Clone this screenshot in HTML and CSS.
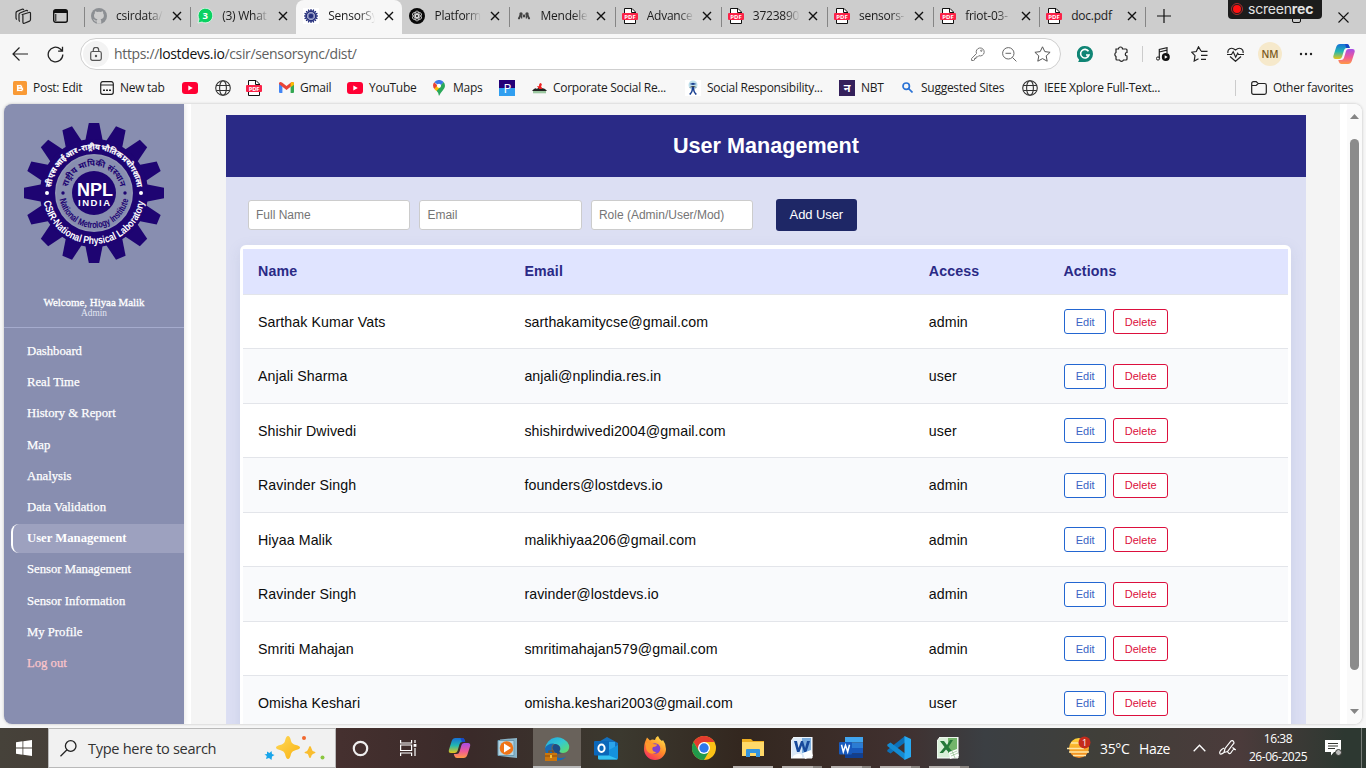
FILE: index.html
```html
<!DOCTYPE html>
<html lang="en">
<head>
<meta charset="utf-8">
<title>SensorSync</title>
<link rel="stylesheet" href="styles.css">
</head>
<body>
<svg class="defs" width="0" height="0" aria-hidden="true">
  <defs>
    <symbol id="close" viewBox="0 0 10 10"><path d="M1 1 9 9M9 1 1 9" fill="none" stroke="#111" stroke-width="1.4"/></symbol>
    <symbol id="pdf" viewBox="0 0 16 16"><path d="M2.500 5V.5h7.500l3.500 3.500V15.500h-11V12" fill="#fff" stroke="#111"/><path d="M9.500.5V4.500h4" fill="none" stroke="#111"/><rect x="0" y="5" width="16" height="7" rx="1" fill="#fb2348"/><text x="8" y="10.700" font-size="6" font-weight="700" text-anchor="middle" fill="#fff">PDF</text></symbol>
    <symbol id="globe" viewBox="0 0 16 16"><g fill="none" stroke="#333" stroke-width="1.100"><circle cx="8" cy="8" r="7.300"/><ellipse cx="8" cy="8" rx="3.400" ry="7.300"/><path d="M1.300 5.500h13.400M1.300 10.500h13.400"/></g></symbol>
    <symbol id="yt" viewBox="0 0 16 12"><rect width="16" height="12" rx="3" fill="#ff0033"/><path d="M6.300 3.500v5L10.800 6z" fill="#fff"/></symbol>
    <linearGradient id="cpA" x1="0" y1="0" x2="0" y2="1"><stop offset="0" stop-color="#1670d8"/><stop offset=".5" stop-color="#22b7b0"/><stop offset="1" stop-color="#e6c619"/></linearGradient>
    <linearGradient id="cpB" x1="0" y1="0" x2="0" y2="1"><stop offset="0" stop-color="#a64de8"/><stop offset=".55" stop-color="#f05a96"/><stop offset="1" stop-color="#ff9a45"/></linearGradient>
    <symbol id="copilot" viewBox="0 0 22 22"><path d="M7 1h6.500q2 0 2.600 2l.6 2h-3q-2 0-2.700 2.300L9 14q-.8 2-2.700 2H2.500Q-.5 16 .5 12.500L3.200 4Q4.200 1 7 1z" fill="url(#cpA)"/><path d="M12 1h2q1.700 0 2.200 2l.6 2h-3.500z" fill="#1747c6"/><path d="M15 21H8.500q-2 0-2.600-2l-.6-2h3q2 0 2.700-2.300L13 8q.8-2 2.700-2h3.800q3 0 2 3.500L18.800 18q-1 3-3.800 3z" fill="url(#cpB)"/></symbol>
    <linearGradient id="edgeG" x1="0" y1="0" x2="1" y2="1"><stop offset="0" stop-color="#1fa5e4"/><stop offset=".5" stop-color="#35c8d0"/><stop offset="1" stop-color="#66e05a"/></linearGradient>
    <linearGradient id="ffG" x1=".8" y1="0" x2=".2" y2="1"><stop offset="0" stop-color="#ffe44d"/><stop offset=".5" stop-color="#ff8b28"/><stop offset="1" stop-color="#f52764"/></linearGradient>
    <linearGradient id="sunG" x1="0" y1="0" x2="0" y2="1"><stop offset="0" stop-color="#ffd43a"/><stop offset="1" stop-color="#f0821b"/></linearGradient>
    <linearGradient id="starG" x1="0" y1="0" x2="1" y2="1"><stop offset="0" stop-color="#ffd95a"/><stop offset="1" stop-color="#f8b211"/></linearGradient>
    <path id="tooth" d="M-9 -51 -5.200 -70H5.200L9 -51z"/>
    <symbol id="gear" viewBox="-70 -70 140 140"><use href="#tooth"/><use href="#tooth" transform="rotate(22.500)"/><use href="#tooth" transform="rotate(45)"/><use href="#tooth" transform="rotate(67.500)"/><use href="#tooth" transform="rotate(90)"/><use href="#tooth" transform="rotate(112.500)"/><use href="#tooth" transform="rotate(135)"/><use href="#tooth" transform="rotate(157.500)"/><use href="#tooth" transform="rotate(180)"/><use href="#tooth" transform="rotate(202.500)"/><use href="#tooth" transform="rotate(225)"/><use href="#tooth" transform="rotate(247.500)"/><use href="#tooth" transform="rotate(270)"/><use href="#tooth" transform="rotate(292.500)"/><use href="#tooth" transform="rotate(315)"/><use href="#tooth" transform="rotate(337.500)"/><circle r="46" fill="none" stroke="currentColor" stroke-width="16"/></symbol>
    <path id="arcOutTop" d="M-43.500 0A43.500 43.500 0 0 1 43.500 0"/>
    <path id="arcOutBot" d="M-51 0A51 51 0 0 0 51 0"/>
    <path id="arcInTop" d="M-27 0A27 27 0 0 1 27 0"/>
    <path id="arcInBot" d="M-35 0A35 35 0 0 0 35 0"/>
  </defs>
</svg>

<header class="tabs">
  <div class="tabs-lead">
    <svg width="17" height="17" viewBox="0 0 17 17" fill="none" stroke="#222" stroke-width="1.200"><path d="M7.500 6.500 14 4.500q1.500-.3 1.500 1v6q0 1.200-1 1.600l-5 2.200q-1.600.5-1.600-1.200V8q0-1.200-.4-1.500z"/><path d="M5 13.500q-1-.3-1-1.500V6.500q0-1 1-1.500l6-2.500q1.300-.4 1.700.8M2 11.500q-1-.3-1-1.500V5q0-1.200 1-1.600L7 1.200q1.300-.4 1.800.8"/></svg>
    <svg width="15" height="14" viewBox="0 0 15 14"><rect x=".7" y=".7" width="13.600" height="12.600" rx="2" fill="none" stroke="#111" stroke-width="1.400"/><path d="M1 1h13v3H1z" fill="#111"/><path d="M2.800 5v7" stroke="#111"/></svg>
  </div>
  <div class="tab"><svg class="fav" viewBox="0 0 16 16"><circle cx="8" cy="8" r="8" fill="#8c8f93"/><path d="M5.800 15.800v-2.300c-2 .4-2.400-.9-3-1.600l-.6-.5c1.300-.4 1.700 1.100 2.400 1.200.6.100 1 0 1.300-.3.100-.6.300-.9.600-1.100C4 10.900 3 9.800 3 7.500c0-.9.300-1.600.9-2.200-.2-.7-.1-1.500.2-2.100.8 0 1.500.5 2 .8q1.900-.5 3.800 0c.5-.3 1.300-.8 2-.8.300.7.400 1.500.2 2.100.5.600.8 1.300.8 2.200 0 2.300-1 3.400-3.400 3.700.5.400.7.900.7 1.700v2.900z" fill="#cdcdcd"/></svg><span class="t">csirdata/</span><svg class="x"><use href="#close"/></svg></div>
  <div class="tab"><svg class="fav" viewBox="0 0 16 16"><path d="M1 15 2 11a7.300 7.300 0 1 1 3 3z" fill="#0bd162" stroke="#fff" stroke-width=".7"/><text x="8.200" y="11.300" text-anchor="middle" font-size="9.500" font-weight="700" fill="#fff">3</text></svg><span class="t">(3) What</span><svg class="x"><use href="#close"/></svg></div>
  <div class="tab active"><svg class="fav gear-mini" viewBox="-8 -8 16 16"><path d="M-8-8H8V8H-8z" fill="#fff"/><use href="#gear" x="-7" y="-7" width="14" height="14"/><circle r="3.600" fill="#7f86b8"/><circle r="2.300"/></svg><span class="t">SensorSy</span><svg class="x"><use href="#close"/></svg></div>
  <div class="tab first-after"><svg class="fav" viewBox="0 0 16 16"><circle cx="8" cy="8" r="8" fill="#080808"/><g fill="none" stroke="#ddd" stroke-width=".8"><ellipse cx="8" cy="6.300" rx="2.200" ry="3.300"/><ellipse cx="8" cy="6.300" rx="2.200" ry="3.300" transform="rotate(60 8 8)"/><ellipse cx="8" cy="6.300" rx="2.200" ry="3.300" transform="rotate(120 8 8)"/><ellipse cx="8" cy="6.300" rx="2.200" ry="3.300" transform="rotate(180 8 8)"/><ellipse cx="8" cy="6.300" rx="2.200" ry="3.300" transform="rotate(240 8 8)"/><ellipse cx="8" cy="6.300" rx="2.200" ry="3.300" transform="rotate(300 8 8)"/></g></svg><span class="t">Platform</span><svg class="x"><use href="#close"/></svg></div>
  <div class="tab"><svg class="fav" viewBox="0 0 16 16" fill="#444"><circle cx="8" cy="8" r="1.400"/><circle cx="5" cy="6" r="1.700"/><circle cx="11" cy="6" r="1.700"/><path d="M4.300 6.500q2.200 0 2 4H5L4.500 8.500 3.800 11H2.500q0-4 1.800-4.500zM11.700 6.500q-2.200 0-2 4H11l.5-2 .7 2.500h1.300q0-4-1.800-4.500z"/><circle cx="3" cy="10.300" r="1.100"/><circle cx="13" cy="10.300" r="1.100"/></svg><span class="t">Mendele</span><svg class="x"><use href="#close"/></svg></div>
  <div class="tab"><svg class="fav"><use href="#pdf"/></svg><span class="t">Advance</span><svg class="x"><use href="#close"/></svg></div>
  <div class="tab"><svg class="fav"><use href="#pdf"/></svg><span class="t">3723890</span><svg class="x"><use href="#close"/></svg></div>
  <div class="tab"><svg class="fav"><use href="#pdf"/></svg><span class="t">sensors-</span><svg class="x"><use href="#close"/></svg></div>
  <div class="tab"><svg class="fav"><use href="#pdf"/></svg><span class="t">friot-03-</span><svg class="x"><use href="#close"/></svg></div>
  <div class="tab"><svg class="fav"><use href="#pdf"/></svg><span class="t nofade">doc.pdf</span><svg class="x"><use href="#close"/></svg></div>
  <div class="tab-new"><svg width="14" height="14" viewBox="0 0 14 14"><path d="M7 0v14M0 7h14" stroke="#111" stroke-width="1.200"/></svg></div>
  <div class="win-ctl"><svg width="9" height="11" viewBox="0 0 9 11"><rect x=".5" y=".5" width="8" height="10" rx="1.500" fill="none" stroke="#111"/></svg><svg width="11" height="11" viewBox="0 0 11 11"><path d="m.5.5 10 10m0-10-10 10" stroke="#111" stroke-width="1.100"/></svg></div>
  <div class="screenrec"><svg width="12" height="12" viewBox="0 0 12 12"><circle cx="6" cy="6" r="5.500" fill="none" stroke="#c33" stroke-width=".8"/><circle cx="6" cy="6" r="4" fill="#f11"/></svg><span>screen<b>rec</b></span></div>
</header>

<nav class="toolbar">
  <svg width="16" height="14" viewBox="0 0 16 14" fill="none" stroke="#222" stroke-width="1.200"><path d="M16 7H1M7.500.5 1 7l6.500 6.500"/></svg>
  <svg width="17" height="17" viewBox="0 0 17 17" fill="none" stroke="#222" stroke-width="1.300"><path d="M15.800 8.500A7.300 7.300 0 1 1 13.300 3l2 2M15.500.8V5.200h-4.400"/></svg>
  <div class="address">
    <span class="lock"><svg width="12" height="14" viewBox="0 0 12 14" fill="none" stroke="#555" stroke-width="1.200"><rect x=".7" y="4.500" width="10.600" height="8.800" rx="1.700"/><path d="M3.300 4.500V3a2.700 2.700 0 0 1 5.400 0v1.500"/><circle cx="6" cy="9" r=".6" fill="#555"/></svg></span>
    <span class="url">https://<b>lostdevs.io</b>/csir/sensorsync/dist/</span>
    <svg width="14" height="14" viewBox="0 0 14 14" fill="none" stroke="#777"><path d="M5.500 6.500a4 4 0 1 1 2.300 2.200L6.500 10H5v1.500H3.500V13l-1 .5H.6v-2z"/><circle cx="10.300" cy="3.700" r=".7"/></svg>
    <svg width="15" height="15" viewBox="0 0 15 15" fill="none" stroke="#666"><circle cx="6.300" cy="6.300" r="5.700"/><path d="M3.500 6.300h5.600M10.400 10.400l4 4"/></svg>
    <svg width="17" height="16" viewBox="0 0 17 16" fill="none" stroke="#555" stroke-linejoin="round"><path d="m8.500.8 2.300 4.800 5.300.7-3.900 3.600 1 5.300-4.700-2.600-4.700 2.600 1-5.300L.9 6.300l5.300-.7z"/></svg>
  </div>
  <div class="ext">
    <svg width="16" height="16" viewBox="0 0 16 16"><path d="M8 0a8 8 0 0 1 8 8 8 8 0 0 1-8 8H1q1-1 1-2.500A8 8 0 0 1 8 0z" fill="#108575"/><path d="M11.500 5.300A4.300 4.300 0 1 0 12 9H9" fill="none" stroke="#fff" stroke-width="1.600"/></svg>
    <svg width="16" height="16" viewBox="0 0 16 16" fill="none" stroke="#222" stroke-width="1.200"><path d="M3 3h2.500a2 2 0 1 1 4 0H13q1 0 1 1v2.500a1.500 1.500 0 0 0 0 3.500V13q0 1-1 1h-2.500a2.200 2.200 0 0 1-4 0H4q-1 0-1-1v-2.500a2.300 2.300 0 0 1 0-4z"/></svg>
    <i class="vr"></i>
    <svg width="14" height="14" viewBox="0 0 14 14"><path d="M3.300 11.500V2.500L11 .7V6M3.300 5 11 3.200" fill="none" stroke="#222" stroke-width="1.200"/><circle cx="2" cy="11.500" r="1.600" fill="none" stroke="#222"/><circle cx="9.800" cy="10" r="4" fill="#111"/><path d="m8.700 8.200 3 1.800-3 1.800z" fill="#fff"/></svg>
    <svg width="17" height="16" viewBox="0 0 17 16" fill="none" stroke="#222" stroke-width="1.200"><path d="M10 5 7.500.8 5.300 5.500.7 6.200 4 9.600 3.200 15l4.300-2.300M10 5.300h6.500M10 9.300h6.500M10 13.300h5"/></svg>
    <svg width="17" height="15" viewBox="0 0 17 15" fill="none" stroke="#222" stroke-width="1.200"><path d="M1 6C.2 2.500 4-.8 8.500 3 13-.8 16.800 2.500 16 6M3 9.500l5.500 4.800L14 9.500M0 7.500h4.500l1.700-2.800 2.500 5.500 2-4 .8 1.300H17"/></svg>
    <span class="avatar">NM</span>
    <svg width="14" height="4" viewBox="0 0 14 4" fill="#222"><circle cx="2" cy="2" r="1.200"/><circle cx="7" cy="2" r="1.200"/><circle cx="12" cy="2" r="1.200"/></svg>
    <svg width="22" height="22"><use href="#copilot"/></svg>
  </div>
</nav>

<nav class="bookmarks">
  <span><svg width="14" height="14" viewBox="0 0 14 14"><rect width="14" height="14" rx="1.500" fill="#f99a35"/><path d="M4 3.500h3.500q2 0 2 2v.7q1 0 1 1V8.500q0 2-2 2H4.500q-1 0-1-1v-5q0-1 .5-1zM5.500 5.700h2M5.500 8.400h3" fill="#fff" stroke="#f99a35" stroke-width=".9"/></svg>Post: Edit</span>
  <span><svg width="14" height="14" viewBox="0 0 14 14" fill="none" stroke="#222" stroke-width="1.200"><path d="M.7 4h12.600M3 .7h8M.7 3v8.300q0 2 2 2h8.600q2 0 2-2V3q0-2.300-2-2.300H2.700Q.7.700.7 3z"/><path d="M3 9.200h2M6 9.200h2M9 9.200h2" stroke-width="1.600"/></svg>New tab</span>
  <span><svg width="16" height="12"><use href="#yt"/></svg></span>
  <span><svg width="16" height="16"><use href="#globe"/></svg></span>
  <span><svg width="16" height="16"><use href="#pdf"/></svg></span>
  <span><svg width="15" height="11" viewBox="0 0 15 11"><path d="M0 1.500V10q0 1 1 1h2.400V3z" fill="#4285f4"/><path d="M11.600 3v8H14q1 0 1-1V1.500z" fill="#34a853"/><path d="M0 2V1.500Q.5-.8 3 .5L7.500 4 12 .5q2.500-1.300 3 1V2L7.500 8z" fill="#ea4335"/><path d="M11.600.9 12 .5q2.500-1.300 3 1v1.300l-3.400 2.500z" fill="#fbbc04"/></svg>Gmail</span>
  <span><svg width="16" height="12"><use href="#yt"/></svg>YouTube</span>
  <span class="wide"><svg width="12" height="16" viewBox="0 0 12 16"><path d="M6 16Q5.500 12.500 3 10L10.500 2q1.500 1.500 1.500 4 0 2-2.300 4.500Q7 13.500 6 16z" fill="#2aa85a"/><path d="M1.300 2.300 5 6 1.500 9Q0 7.500 0 5.500t1.300-3.200z" fill="#e94335"/><path d="M1.300 2.300A6 6 0 0 1 10.600 2L7 6z" fill="#3c78e8"/><path d="m1.300 9 3-3.500 3.500 1L3.500 11z" fill="#fbbc04"/><circle cx="6" cy="5.800" r="2.100" fill="#fff"/></svg>Maps</span>
  <span><svg width="16" height="16" viewBox="0 0 16 16"><path d="M0 0h16v8H0z" fill="#240078"/><path d="M0 8h16v8H0z" fill="#319ff0"/><text x="8.200" y="12.700" font-size="13" text-anchor="middle" fill="#fff">P</text></svg></span>
  <span><svg width="15" height="12" viewBox="0 0 15 12"><path d="M1 9h13v2.300H1z" fill="#9bc7a0"/><path d="M0 9q3-4 5-2 2-3 4-1 4 0 6 3z" fill="#222"/><path d="M7 7 5 4l2 .3Q7 1 9 1l1 2-1 1 1.500 3z" fill="#e22"/></svg>Corporate Social Re...</span>
  <span><svg width="16" height="16" viewBox="0 0 16 16"><path d="M0 0h16v16H0z" fill="#fff"/><circle cx="8" cy="5" r="4.500" fill="#bfe0ec"/><path d="M4.500 4 8 2.800 11.500 4 8 5zM4 14q3-2 2.800-7h2.400Q9 12 12 14l-1.500 1Q8 12 8 10q0 2-2.500 5z" fill="#183f91"/><path d="M4 7.500q4-3 8 0L8 7z" fill="#333"/></svg>Social Responsibility...</span>
  <span><svg width="16" height="16" viewBox="0 0 16 16"><path d="M0 0h16v16H0z" fill="#34205b"/><text x="8" y="12" font-size="11" font-weight="700" text-anchor="middle" fill="#fff">न</text></svg>NBT</span>
  <span class="wide"><svg width="11" height="11" viewBox="0 0 11 11" fill="none" stroke="#2b73d5" stroke-width="1.700"><circle cx="4.200" cy="4.200" r="3.200"/><path d="m6.500 6.500 4 4"/></svg>Suggested Sites</span>
  <span><svg width="16" height="16"><use href="#globe"/></svg>IEEE Xplore Full-Text...</span>
  <span class="other"><svg width="16" height="14" viewBox="0 0 16 14" fill="none" stroke="#222" stroke-width="1.200"><path d="M.7 11.500v-9Q.7.700 2.500.7h2.700L7 2.500h6.500q1.800 0 1.800 1.800v7.200q0 1.800-1.800 1.800h-11Q.7 13.300.7 11.500zM.7 4.500h4.500l2-2"/></svg>Other favorites</span>
</nav>

<div class="page">
  <aside class="sidebar">
    <svg class="logo" viewBox="-70 -70 140 140">
      <use href="#gear" x="-70" y="-70" width="140" height="140"/>
      <circle r="39" fill="#9297b5"/><circle r="37.500" fill="#888eb0"/><circle r="22"/>
      <g fill="#fff" font-weight="700" text-anchor="middle">
        <text class="npl" x="1" y="2.500" textLength="36">NPL</text>
        <text class="india" x="0" y="13" textLength="32">INDIA</text>
        <text class="hindi"><textPath href="#arcOutTop" startOffset="50%">सी एस आई आर - राष्ट्रीय भौतिक प्रयोगशाला</textPath></text>
        <text class="arc"><textPath href="#arcOutBot" startOffset="50%" textLength="143" lengthAdjust="spacingAndGlyphs">CSIR-National Physical Laboratory</textPath></text>
        <circle cx="-47" r="2"/><circle cx="47" r="2"/>
      </g>
      <g font-weight="700" text-anchor="middle">
        <text class="hindi inner"><textPath href="#arcInTop" startOffset="50%">राष्ट्रीय मापिकी संस्थान</textPath></text>
        <text class="arc small"><textPath href="#arcInBot" startOffset="50%" textLength="97" lengthAdjust="spacingAndGlyphs">National Metrology Institute</textPath></text>
        <circle cx="-31" r="1.700"/><circle cx="31" r="1.700"/>
      </g>
    </svg>
    <div class="who"><strong>Welcome, Hiyaa Malik</strong><small>Admin</small></div>
    <ul class="menu">
      <li>Dashboard</li><li>Real Time</li><li>History &amp; Report</li><li>Map</li><li>Analysis</li><li>Data Validation</li><li class="on">User Management</li><li>Sensor Management</li><li>Sensor Information</li><li>My Profile</li><li class="out">Log out</li>
    </ul>
  </aside>
  <main class="main">
    <section class="panel">
      <h1>User Management</h1>
      <form class="add">
        <input placeholder="Full Name"><input placeholder="Email"><input placeholder="Role (Admin/User/Mod)"><button type="button">Add User</button>
      </form>
      <div class="card">
        <div class="row head"><span>Name</span><span>Email</span><span>Access</span><span>Actions</span></div>
        <div class="row"><span>Sarthak Kumar Vats</span><span>sarthakamitycse@gmail.com</span><span>admin</span><span class="act"><button>Edit</button><button class="del">Delete</button></span></div>
        <div class="row"><span>Anjali Sharma</span><span>anjali@nplindia.res.in</span><span>user</span><span class="act"><button>Edit</button><button class="del">Delete</button></span></div>
        <div class="row"><span>Shishir Dwivedi</span><span>shishirdwivedi2004@gmail.com</span><span>user</span><span class="act"><button>Edit</button><button class="del">Delete</button></span></div>
        <div class="row"><span>Ravinder Singh</span><span>founders@lostdevs.io</span><span>admin</span><span class="act"><button>Edit</button><button class="del">Delete</button></span></div>
        <div class="row"><span>Hiyaa Malik</span><span>malikhiyaa206@gmail.com</span><span>admin</span><span class="act"><button>Edit</button><button class="del">Delete</button></span></div>
        <div class="row"><span>Ravinder Singh</span><span>ravinder@lostdevs.io</span><span>admin</span><span class="act"><button>Edit</button><button class="del">Delete</button></span></div>
        <div class="row"><span>Smriti Mahajan</span><span>smritimahajan579@gmail.com</span><span>admin</span><span class="act"><button>Edit</button><button class="del">Delete</button></span></div>
        <div class="row"><span>Omisha Keshari</span><span>omisha.keshari2003@gmail.com</span><span>user</span><span class="act"><button>Edit</button><button class="del">Delete</button></span></div>
      </div>
    </section>
  </main>
  <div class="scroll"><svg width="9" height="5" viewBox="0 0 9 5"><path d="M0 5 4.500 0 9 5z" fill="#858585"/></svg><i></i><svg width="9" height="5" viewBox="0 0 9 5"><path d="M0 0h9L4.500 5z" fill="#858585"/></svg></div>
</div>

<footer class="taskbar">
  <div class="start"><svg width="16" height="16" viewBox="0 0 16 16" fill="#fff"><path d="M0 2.200 6.500 1.300V7.600H0zM7.300 1.200 16 0v7.600H7.300zM0 8.400h6.500v6.300L0 13.800zM7.300 8.400H16V16l-8.700-1.200z"/></svg></div>
  <div class="search">
    <svg width="17" height="17" viewBox="0 0 17 17" fill="none" stroke="#222" stroke-width="1.300"><circle cx="10.700" cy="6" r="5.300"/><path d="M7 9.800.5 16.300"/></svg>
    <span>Type here to search</span>
    <svg class="sparkle" width="62" height="26" viewBox="0 0 62 26"><path d="M24 1q2 0 3 5 .8 3 5 4 4 1 4 2.500T32 15q-4.200 1-5 4-1 5-3 5t-3-5q-.8-3-5-4-4-1-4-2.500T16 10q4.200-1 5-4 1-5 3-5z" fill="url(#starG)"/><path d="M46 11q1 0 1.500 2.500t2.500 3q1.500.5 1.500 1T50 18.500t-2.500 2Q47 23 46 23t-1.500-2.500T42 18.500q-1.500-.5-1.500-1t1.500-1 2.500-3Q45 11 46 11z" fill="#f9bd2e"/><path d="m3 16.500 2.500 1.500 2-2 .5 3 2.500 1L8 21.500 7.500 25 5 23l-3 1 .8-3L.5 19.500 3 19z" fill="#19a5ea"/><circle cx="40" cy="3" r="2" fill="#f1672d"/><circle cx="58.500" cy="22.500" r="2" fill="#8ac63f"/></svg>
  </div>
  <div class="sys"><svg width="17" height="17" viewBox="0 0 17 17"><circle cx="8.500" cy="8.500" r="6.700" fill="none" stroke="#eee" stroke-width="2.200"/></svg></div>
  <div class="sys"><svg width="17" height="16" viewBox="0 0 17 16" fill="none" stroke="#fff" stroke-width="1.200"><path d="M.6 0v3h11V0M.6 16v-3h11v3M.6 5h11v5.500H.6zM15 0v3M15 8v8"/><path d="M13.600 4h2.800v2.800h-2.800z" fill="#fff" stroke="none"/></svg></div>
  <div class="apps">
    <div><svg width="23" height="22"><use href="#copilot"/></svg></div>
    <div><svg width="22" height="20" viewBox="0 0 22 20"><path d="M3 1.500 20 0v20L3 18z" fill="#89b3c7"/><path d="M1 2.500h16v15H1z" fill="#b4d5e3" stroke="#6a9bb2"/><circle cx="9.500" cy="10" r="6.800" fill="#ef7417"/><path d="M7 5.500v9l7-4.500z" fill="#fff"/></svg></div>
    <div class="current"><svg width="25" height="25" viewBox="0 0 25 25"><path d="M0 13A12.500 12.500 0 0 1 24 9c1 5-2 8-6 8-3 0-4-1-3.300-2 2-3-.5-7-5-7Q3 8 0 13z" fill="url(#edgeG)"/><path d="M0 12q3-5 9-4.500Q5 10 7 15.500q2 6 8 6.500 3 .2 6-1.500-3 4-8.500 4Q1 24 0 12z" fill="#176bb7"/><path d="M7.500 12Q8 8.500 10 8q4 .5 5 3.500.5 2-.7 3.500-.5 2 3 2-7 3-9.800-5z" fill="#1b4c86"/><path d="M0 17h12v8H0z" fill="#ca750d"/><path d="M4 17v-2h4v2M0 20h12" fill="none" stroke="#8c4c09" stroke-width="1.200"/><path d="M5 19h2v3H5z" fill="#f6bd33"/></svg></div>
    <div><svg width="24" height="23" viewBox="0 0 24 23"><path d="M3 6 13 0l11 6v5H3z" fill="#1370be"/><path d="M6 5h15v10H6z" fill="#2ba4ea"/><path d="m4 19 20-11v13q0 1.500-1.500 1.500H5.500Q4 22.500 4 21z" fill="#1492dd"/><path d="m4 14 19.500 8q-.5.500-1.500.5H5.500Q4 22.500 4 21z" fill="#35c2f2"/><rect y="4" width="15" height="14.500" rx="1" fill="#0b67b9"/><ellipse cx="7.500" cy="11.300" rx="3.100" ry="3.700" fill="none" stroke="#fff" stroke-width="2"/></svg></div>
    <div><svg width="24" height="24" viewBox="0 0 24 24"><path d="M2 6 4 1.500l3 3Q9 3 12 4q.5-3 3-4 1 3 4 5l1-1q3 4 3 9a11 11 0 0 1-22 0q0-4 1-7z" fill="url(#ffG)"/><circle cx="12" cy="12.500" r="5.300" fill="#8041cf"/><path d="M2 7q4-2 8 1l4 .5q0 2-4 2.500-1 1-.5 3 1 2.500 4 2-3 3-7 1T3 10z" fill="#ff9a2d"/></svg></div>
    <div><svg width="24" height="24" viewBox="0 0 24 24"><circle cx="12" cy="12" r="12" fill="#fbc116"/><path d="M1.600 6A12 12 0 0 1 22.400 6H12L6.800 15z" fill="#e33b2e"/><path d="M1.600 6A12 12 0 0 0 12 24l5.200-9H6.800z" fill="#219a4b"/><circle cx="12" cy="12" r="6" fill="#fff"/><circle cx="12" cy="12" r="4.700" fill="#2d78ed"/></svg></div>
    <div class="open single"><svg width="22" height="18" viewBox="0 0 22 18"><path d="M0 0h9l2 2h11v15H0z" fill="#eeae21"/><path d="M0 3h22v14H0z" fill="#ffd969"/><path d="M4 18v-7q0-1 1-1h12q1 0 1 1v7h-4v-4H8v4z" fill="#3495df"/></svg></div>
    <div class="open"><svg width="22" height="22" viewBox="0 0 22 22"><path d="M3 0h18v21H0V4z" fill="#dce9f7" stroke="#fff"/><path d="M11 1h9v15h-9z" fill="#7badde"/><path d="m3 4 3 11h2.500L11 8.500l2 6.500h2.500L19 4h-3l-1.900 7L12 4h-2l-2.500 7L6 4z" fill="#17499b"/><path d="m12 16 8-3 2 6-8 3zM2 19q6-4 9-1v3H2z" fill="#fff"/></svg></div>
    <div class="open"><svg width="24" height="22" viewBox="0 0 24 22"><path d="M6 0h18v5.500H6z" fill="#41a5ee"/><path d="M6 5.500h18V11H6z" fill="#2b7cd3"/><path d="M6 11h18v5.500H6z" fill="#185abd"/><path d="M6 16.500h18V21H6z" fill="#103f91"/><rect y="5" width="13" height="12.500" rx="1" fill="#185abd"/><path d="m2.500 7.800 1.800 7 2.200-6.500 2.200 6.500 1.800-7" fill="none" stroke="#fff" stroke-width="1.500"/></svg></div>
    <div class="open"><svg width="24" height="24" viewBox="0 0 24 24"><path d="M18 0v6.500L3.500 17.500.3 15.500V14z" fill="#0c70b8"/><path d="M.3 8.500 3.500 6.500 18 17.500V24L.3 10z" fill="#148bd2"/><path d="m17.500 0 6.500 3v18l-6.500 3z" fill="#28a9f1"/></svg></div>
    <div class="open"><svg width="22" height="22" viewBox="0 0 22 22"><path d="M3 0h18v21H0V4z" fill="#d9efd9" stroke="#fff"/><path d="M11 1h9v15h-9z" fill="#73b56b"/><path d="M3 4h4l3 4 3-5h3l-4.500 7 5 6h-4L9 12.500 6 16H2.500l5-6z" fill="#26793a"/><path d="m12 15 8-3 2 7-9 3z" fill="#fff"/><path d="m13 17 7-3M14 19l7-3M15 14l3 7" stroke="#8aba86" stroke-width=".7"/></svg></div>
  </div>
  <div class="tray">
    <svg width="24" height="24" viewBox="0 0 24 24"><circle cx="12" cy="12" r="10" fill="url(#sunG)"/><path d="M4 7h10M0 12.500h17M2 16h20M6 19.500h13" stroke="#ffe6a5" stroke-width="1.300"/><circle cx="17.500" cy="6.500" r="6" fill="#c42b1c"/><text x="17.500" y="10" font-size="9" fill="#fff" text-anchor="middle">1</text></svg>
    <span class="temp">35°C</span><span class="haze">Haze</span>
    <svg width="13" height="8" viewBox="0 0 13 8"><path d="m.7 7.300 5.800-6 5.800 6" fill="none" stroke="#fff" stroke-width="1.300"/></svg>
    <svg width="17" height="17" viewBox="0 0 17 17" fill="none" stroke="#fff" stroke-width="1.200"><path d="m5 12.500 1-4L12 1q1.500-1 2.500.5t-.2 2.500L8.500 11.500zM5 12.500Q1 15.500.7 13T5 8M8.500 11.500q2 4 4 .5t3.500-2.500-2.500-2"/></svg>
    <span class="clock">16:38<br>26-06-2025</span>
    <svg width="17" height="17" viewBox="0 0 17 17"><path d="M0 0h16v12H9l-3 3.500V12H0z" fill="#fff"/><path d="M3 3.500h10M3 6h10M3 8.500h7" stroke="#363833"/><circle cx="13.500" cy="12.500" r="3" fill="#bbb" stroke="#363833"/></svg>
    <i></i>
  </div>
</footer>
</body>
</html>
```
FILE: styles.css
```css
* { box-sizing: border-box; }
body { margin: 0; width: 1366px; height: 768px; overflow: hidden; display: flex; flex-direction: column; background: #f7f7f7; font: 12px "Open Sans", "Noto Sans", sans-serif; color: #1c1c1c; }
svg { flex: none; display: block; }
.defs { position: absolute; }

/* tab strip */
.tabs { position: relative; height: 34px; flex: none; display: flex; background: #cdcdcd; }
.tabs-lead { width: 84px; display: flex; align-items: center; padding: 0 0 2px 15px; gap: 21px; }
.tab { width: 106.150px; height: 34px; display: grid; grid-template-columns: 16px 47px 10px; column-gap: 9px; align-items: center; padding: 0 0 2px 7px; position: relative; }
.tab::before { content: ""; position: absolute; left: 0; top: 7px; width: 1px; height: 20px; background: #858585; }
.tab .fav { width: 16px; height: 16px; }
.tab .x { width: 10px; height: 10px; margin-left: -.5px; }
.tab .t { white-space: nowrap; font-size: 12px; line-height: 18px; letter-spacing: -.25px; margin-top: -1px; -webkit-mask-image: linear-gradient(90deg, #000 68%, transparent 100%); mask-image: linear-gradient(90deg, #000 68%, transparent 100%); }
.tab .t.nofade { -webkit-mask-image: none; mask-image: none; }
.tab.active { background: #f7f7f7; border-radius: 8px 8px 0 0; }
.tab.active::before, .tab.first-after::before { display: none; }
.gear-mini { color: #26307c; fill: #26307c; }
.tab-new { width: 36px; display: flex; align-items: center; justify-content: center; padding-bottom: 3px; border-left: 1px solid #858585; height: 20px; margin-top: 7px; }
.win-ctl { display: flex; margin-left: auto; gap: 37px; align-items: center; padding: 0 17px 0 0; }
.screenrec { position: absolute; left: 1228px; top: -6px; width: 94px; height: 25px; border-radius: 4px; background: #1c1c1c; color: #e2e2e2; display: flex; align-items: center; gap: 5px; padding: 4px 0 0 3px; font: 14px Inter, sans-serif; letter-spacing: -.2px; }
.screenrec span { margin-top: -1px; }
.screenrec b { font-weight: 700; }

/* toolbar */
.toolbar { height: 40px; flex: none; display: flex; align-items: center; padding-left: 12px; gap: 19px; }
.address { width: 981px; height: 32px; margin-left: -3px; border: 1px solid #cfcfcf; border-radius: 16px; background: #fff; display: flex; align-items: center; padding: 0 9px 0 2px; gap: 17px; }
.address > svg:first-of-type { margin-left: auto; }
.lock { width: 26px; height: 26px; border-radius: 50%; background: #f3f3f3; display: grid; place-items: center; }
.url { font-size: 14px; letter-spacing: -.35px; color: #606060; margin: -1px 0 0 -12px; }
.url b { font-weight: 400; color: #111; }
.ext { display: grid; grid-template-columns: 36px 29px 14px 35px 36px 31px 41px 34px 22px; align-items: center; margin-left: -3px; }
.vr { width: 1px; height: 16px; background: #ccc; }
.avatar { width: 24px; height: 24px; border-radius: 50%; background: #f6e9cb; color: #7a5a1e; display: grid; place-items: center; font-size: 10px; font-weight: 600; }

/* bookmarks */
.bookmarks { height: 30px; flex: none; display: grid; grid-template-columns: 87px 82px 33px 31px 33px 68px 86px 66px 33px 153px 154px 63px 120px 213px 1fr; padding: 0 0 3px 13px; align-items: center; white-space: nowrap; letter-spacing: -.27px; }
.bookmarks span { display: flex; align-items: center; gap: 6px; }
.bookmarks .wide { gap: 8px; }
.bookmarks .other { height: 16px; border-left: 1px solid #ccc; padding-left: 15px; }

/* browser page area */
.page { height: 620px; flex: none; margin: 0 4px; display: flex; border-radius: 8px; overflow: hidden; background: #fff; box-shadow: 0 0 3px #bbb; }
.sidebar { width: 180px; flex: none; background: #888eb0; color: #fff; font-family: "Liberation Serif", serif; box-shadow: 0 0 6px rgba(0,0,0,.14); }
.logo { width: 140px; height: 140px; margin: 19px 20px 0; color: #1e0472; fill: #1e0472; font-family: "Liberation Sans", "Noto Sans", sans-serif; }
.logo .npl { font-size: 18px; }
.logo .india { font-size: 9.500px; }
.logo .hindi { font-size: 7.800px; word-spacing: -1.200px; font-family: "Noto Sans", sans-serif; stroke: #fff; stroke-width: .2px; }
.logo .inner { font-size: 8.500px; word-spacing: 0; stroke: none; }
.logo .arc { font-size: 10.500px; }
.logo .small { font-size: 9.500px; }
.who { height: 65px; border-bottom: 1px solid #a5abcd; padding-top: 33px; text-align: center; display: flex; flex-direction: column; line-height: 12px; }
.who strong { font-weight: 400; font-size: 10.900px; -webkit-text-stroke: .3px #fff; }
.who small { font-size: 9.300px; line-height: 10px; color: #e3e6f3; }
.menu { list-style: none; margin: 9px 0 0; padding: 0 0 0 7px; }
.menu li { height: 29px; line-height: 29px; margin-bottom: 2.200px; padding-left: 16px; font-size: 12.700px; -webkit-text-stroke: .25px currentColor; }
.menu .on { background: #9da1bf; border-left: 2px solid #fff; padding-left: 14px; border-radius: 8px 0 0 8px; font-weight: 700; -webkit-text-stroke: 0; }
.menu .out { color: #fcc5cb; }

.main { width: 1149px; margin-left: 7px; background: #f4f4f4; padding: 11px 34px 0 35px; font-family: "Liberation Sans", Arial, sans-serif; overflow: hidden; }
.panel { background: #dcdff3; width: 1080px; height: 700px; }
.panel h1 { margin: 0; height: 62px; line-height: 61px; text-align: center; background: #2a2a86; color: #fff; font-size: 21.600px; }
.add { display: flex; gap: 9.250px; padding: 22px 0 0 22px; height: 68px; align-items: flex-start; }
.add input { width: 162.200px; height: 30px; margin-top: 1px; border: 1px solid #ccc; border-radius: 3px; padding: 0 7px; font: 12px "Liberation Sans", Arial, sans-serif; }
.add input::placeholder { color: #757575; }
.add button { width: 81px; height: 32px; margin-left: 13.500px; border: 0; border-radius: 3px; background: #1e2766; color: #fff; font: 13px "Liberation Sans", Arial, sans-serif; letter-spacing: -.1px; padding: 0 0 1px; }
.card { margin: 0 15px 0 14px; background: #fff; border-radius: 6px; padding: 4px 3px; box-shadow: 0 4px 14px rgba(120,130,180,.16); }
.row { display: grid; grid-template-columns: 266.400px 404.400px 134.600px 1fr; height: 54.500px; align-items: center; padding-left: 15px; border-bottom: 1px solid #e3e5ea; font-size: 14.200px; letter-spacing: .085px; color: #0c0c0c; }
.row:nth-child(odd) { background: #f9fafc; }
.row.head { height: 45.800px; background: #e0e4ff; color: #2a2a86; font-weight: 700; letter-spacing: .15px; }
.act { display: flex; gap: 7px; margin-left: .8px; }
.act button { width: 42px; height: 25px; padding: 0; border: 1px solid #2366d1; border-radius: 3px; background: #fff; color: #3a63c4; font: 11px "Liberation Sans", Arial, sans-serif; }
.act .del { width: 55px; border-color: #dc0f3d; color: #dc0f3d; }
.scroll { width: 15px; margin-left: 7px; background: #fafafa; display: flex; flex-direction: column; align-items: center; padding: 10px 0; }
.scroll i { width: 9px; height: 531px; margin: 20px 0 auto; background: #8b8b8b; border-radius: 5px; }

/* taskbar */
.taskbar { height: 40px; flex: none; margin-top: 4px; display: flex; color: #fff; background: linear-gradient(90deg, #46423a 0, #45302f 340px, #3a2a29 470px, #3b392f 620px, #33271f 740px, #40302f 900px, #3b3f43 985px, #403f39 1100px, #4b3b3b 1240px, #2d3831 1345px); }
.start { width: 48px; display: grid; place-items: center; }
.search { width: 288px; background: #f1f1f1; border: 1px solid #b9b9b9; color: #333; display: flex; align-items: center; padding-left: 11px; gap: 11px; font-size: 14.600px; letter-spacing: -.32px; }
.sparkle { margin-left: auto; margin-right: 9px; }
.sys { width: 48px; display: grid; place-items: center; }
.apps { display: flex; margin-left: 3px; }
.apps div { width: 48.900px; display: grid; place-items: center; position: relative; }
.apps .current { background: linear-gradient(#69625b, #69625b) 0 0 / 48px 100% no-repeat; }
.apps .current::after, .apps .open::after { content: ""; position: absolute; left: 0; bottom: 0; width: 48px; height: 2px; background: #b9b9b9; }
.apps .open::after { left: 5px; width: 40px; background: linear-gradient(90deg, #b5b0ad 31px, #88837f 31px); }
.apps .single::after { background: #b5b0ad; }
.tray { margin-left: auto; display: grid; grid-template-columns: 33px 39px 54px 26px 24px 82px 36px 5px; align-items: center; font-size: 14px; letter-spacing: -.35px; }
.clock { text-align: center; font-size: 12px; line-height: 18px; letter-spacing: -.45px; white-space: nowrap; width: 70px; }
.tray i { width: 1px; height: 40px; background: #777c78; }
```
